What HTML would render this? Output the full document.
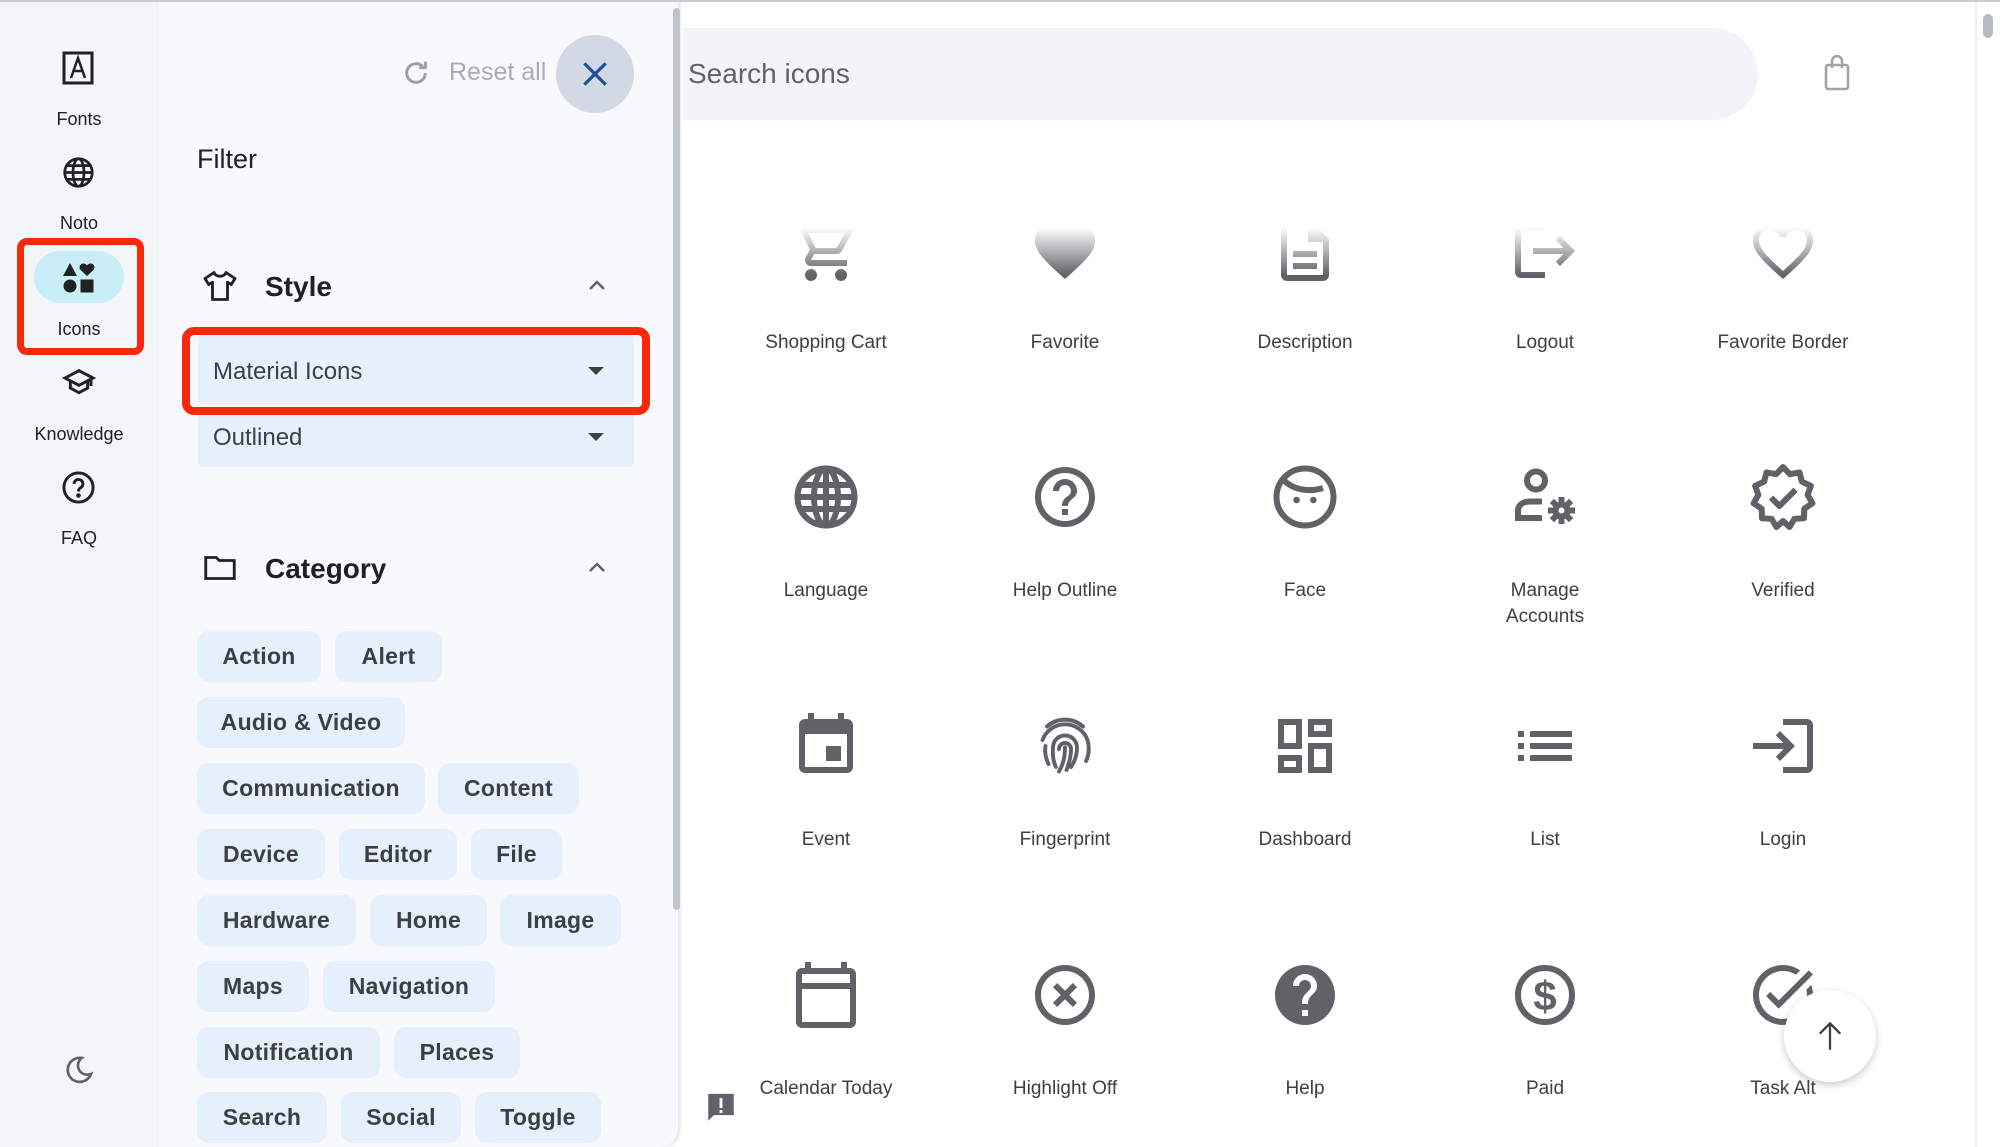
<!DOCTYPE html>
<html><head><meta charset="utf-8"><style>
*{box-sizing:border-box;margin:0;padding:0}
body{width:2000px;height:1147px;overflow:hidden;background:#fff;font-family:"Liberation Sans",sans-serif;position:relative;color:#202124}
.abs{position:absolute}
.rail{left:0;top:0;width:158px;height:1147px;background:#f3f5f9}
.rl{position:absolute;width:158px;text-align:center;font-size:18px;color:#202124}
.panel{left:158px;top:0;width:520px;height:1147px;background:#f8f9fd;border-radius:0 0 18px 0;box-shadow:2px 0 4px rgba(0,0,0,.12)}
.chip{position:absolute;height:51px;background:#e6effc;border-radius:12px;font-size:23px;font-weight:bold;color:#3c4043;line-height:51px;text-align:center;letter-spacing:.3px}
.ic{position:absolute;width:72px;height:72px}
.lb{position:absolute;width:230px;text-align:center;font-size:19px;color:#3c4043;line-height:26px}
</style></head><body>
<div class="abs" style="left:0;top:0;width:2000px;height:2px;background:#c8ccd2;z-index:9"></div>
<div class="abs rail"></div>
<svg class="abs" style="left:62px;top:50px" width="32" height="36" viewBox="0 0 32 36"><rect x="2" y="3" width="28" height="30" fill="none" stroke="#202124" stroke-width="3"/><path d="M9 28 L16 8 L23 28 M11.5 21 H20.5" fill="none" stroke="#202124" stroke-width="2.5"/></svg>
<div class="rl" style="top:109px">Fonts</div>
<svg class="abs" style="left:62px;top:156px" width="33" height="33" viewBox="0 0 24 24" fill="none" stroke="#202124" stroke-width="2"><circle cx="12" cy="12" r="10"/><ellipse cx="12" cy="12" rx="4" ry="10"/><path d="M2 12h20M3.5 7h17M3.5 17h17"/></svg>
<div class="rl" style="top:213px">Noto</div>
<div class="abs" style="left:34px;top:251px;width:90px;height:52px;border-radius:26px;background:#c8eef8"></div>
<svg class="abs" style="left:62px;top:262px" width="34" height="32" viewBox="0 0 34 32" fill="#202124"><path d="M1 14 L8 1 L15 14Z"/><path d="M25 14 l-7-6.5 a4 4 0 0 1 7-4 a4 4 0 0 1 7 4Z"/><circle cx="8" cy="24" r="6.5"/><rect x="18.5" y="17.5" width="13" height="13"/></svg>
<div class="rl" style="top:319px">Icons</div>
<div class="abs" style="left:17px;top:238px;width:127px;height:117px;border:7px solid #f7290a;border-radius:10px"></div>
<svg class="abs" style="left:62px;top:366px" width="34" height="32" viewBox="0 0 24 24" fill="none" stroke="#202124" stroke-width="2.2"><path d="M1.5 9L12 3.5 22.5 9 12 14.5Z"/><path d="M5.5 11.5v5L12 20l6.5-3.5v-5M21 9v6"/></svg>
<div class="rl" style="top:424px">Knowledge</div>
<svg class="abs" style="left:61px;top:470px" width="35" height="35" viewBox="0 0 24 24" fill="none" stroke="#202124" stroke-width="2"><circle cx="12" cy="12" r="10"/><path d="M9 9.5a3 3 0 1 1 4.5 2.6c-1 .6-1.5 1.2-1.5 2.6"/><circle cx="12" cy="17.5" r=".6" fill="#202124"/></svg>
<div class="rl" style="top:528px">FAQ</div>
<svg class="abs" style="left:63px;top:1054px" width="32" height="32" viewBox="0 0 24 24" fill="none" stroke="#5f6368" stroke-width="2"><path d="M14 3a9 9 0 1 0 7 12A7 7 0 0 1 14 3z"/></svg>

<div class="abs panel"></div>
<div class="abs" style="left:673px;top:8px;width:7px;height:902px;background:#c0c4ca;border-radius:4px"></div>
<svg class="abs" style="left:400px;top:57px" width="32" height="32" viewBox="0 0 24 24" fill="none" stroke="#9aa0a6" stroke-width="2.2"><path d="M19 12a7 7 0 1 1-2.2-5.1"/><path d="M19 3.5V8h-4.5" /></svg>
<div class="abs" style="left:449px;top:58px;font-size:25px;color:#a8adb3">Reset all</div>
<div class="abs" style="left:556px;top:35px;width:78px;height:78px;border-radius:50%;background:#d2d9e5"></div>
<svg class="abs" style="left:579px;top:58px" width="32" height="32" viewBox="0 0 24 24" stroke="#1b4ea0" stroke-width="2.4"><path d="M4 4L20 20M20 4L4 20"/></svg>
<div class="abs" style="left:197px;top:144px;font-size:27px;color:#202124">Filter</div>
<svg class="abs" style="left:202px;top:268px" width="36" height="36" viewBox="0 0 24 24" fill="none" stroke="#202124" stroke-width="1.9" stroke-linejoin="round"><path d="M8 3l-6 4 2.5 4 2.5-1.5V21h10V9.5l2.5 1.5L22 7l-6-4c-.5 1.5-2 2.5-4 2.5S8.5 4.5 8 3z"/></svg>
<div class="abs" style="left:265px;top:271px;font-size:28px;font-weight:bold;color:#202124">Style</div>
<svg class="abs" style="left:585px;top:275px" width="24" height="20" viewBox="0 0 24 20" fill="none" stroke="#5f6368" stroke-width="2.5"><path d="M5 14l7-7 7 7"/></svg>
<div class="abs" style="left:198px;top:334px;width:436px;height:71px;background:#e7f0fd;border-radius:6px"></div>
<div class="abs" style="left:213px;top:358px;font-size:24px;color:#3c4043">Material Icons</div>
<svg class="abs" style="left:587px;top:366px" width="18" height="10" viewBox="0 0 18 10"><path d="M1 1h16L9 9z" fill="#3c4043"/></svg>
<div class="abs" style="left:182px;top:327px;width:468px;height:88px;border:8px solid #f7290a;border-radius:12px"></div>
<div class="abs" style="left:198px;top:415px;width:436px;height:52px;background:#e7f0fd;border-radius:0 0 6px 6px"></div>
<div class="abs" style="left:213px;top:424px;font-size:24px;color:#3c4043">Outlined</div>
<svg class="abs" style="left:587px;top:432px" width="18" height="10" viewBox="0 0 18 10"><path d="M1 1h16L9 9z" fill="#3c4043"/></svg>
<svg class="abs" style="left:202px;top:550px" width="36" height="36" viewBox="0 0 24 24" fill="none" stroke="#202124" stroke-width="1.9"><path d="M2.5 5h7l2 2h10v12h-19z"/></svg>
<div class="abs" style="left:265px;top:553px;font-size:28px;font-weight:bold;color:#202124">Category</div>
<svg class="abs" style="left:585px;top:557px" width="24" height="20" viewBox="0 0 24 20" fill="none" stroke="#5f6368" stroke-width="2.5"><path d="M5 14l7-7 7 7"/></svg>

<div class="chip" style="left:197px;top:631px;width:124px">Action</div>
<div class="chip" style="left:335px;top:631px;width:107px">Alert</div>
<div class="chip" style="left:197px;top:697px;width:208px">Audio &amp; Video</div>
<div class="chip" style="left:197px;top:763px;width:228px">Communication</div>
<div class="chip" style="left:438px;top:763px;width:141px">Content</div>
<div class="chip" style="left:197px;top:829px;width:128px">Device</div>
<div class="chip" style="left:339px;top:829px;width:118px">Editor</div>
<div class="chip" style="left:471px;top:829px;width:91px">File</div>
<div class="chip" style="left:197px;top:895px;width:159px">Hardware</div>
<div class="chip" style="left:370px;top:895px;width:117px">Home</div>
<div class="chip" style="left:500px;top:895px;width:121px">Image</div>
<div class="chip" style="left:197px;top:961px;width:112px">Maps</div>
<div class="chip" style="left:323px;top:961px;width:172px">Navigation</div>
<div class="chip" style="left:197px;top:1027px;width:183px">Notification</div>
<div class="chip" style="left:394px;top:1027px;width:126px">Places</div>
<div class="chip" style="left:197px;top:1092px;width:130px">Search</div>
<div class="chip" style="left:341px;top:1092px;width:120px">Social</div>
<div class="chip" style="left:475px;top:1092px;width:126px">Toggle</div>

<div class="abs" style="left:683px;top:28px;width:1075px;height:92px;background:#f2f4f9;border-radius:0 46px 46px 0"></div>
<div class="abs" style="left:688px;top:58px;font-size:28px;color:#5f6368">Search icons</div>
<svg class="abs" style="left:1823px;top:55px" width="28" height="36" viewBox="0 0 28 36" fill="none" stroke="#a0a4a8" stroke-width="2.5"><rect x="3" y="10" width="22" height="24" rx="2"/><path d="M9 13V6a5 5 0 0 1 10 0v7"/></svg>
<div class="abs" style="left:1975px;top:2px;width:2px;height:1145px;background:#eceef0"></div>
<div class="abs" style="left:1983px;top:14px;width:10px;height:24px;background:#b7bbbf;border-radius:5px"></div>

<svg class="ic" style="left:790px;top:215px" viewBox="0 0 24 24" fill="#5f6368"><path d="M15.55 13c.75 0 1.41-.41 1.75-1.03l3.58-6.49c.37-.66-.11-1.48-.87-1.48H5.21l-.94-2H1v2h2l3.6 7.59-1.35 2.44C4.52 15.37 5.48 17 7 17h12v-2H7l1.1-2h7.45zM6.16 6h12.15l-2.76 5H8.53L6.16 6zM7 18c-1.1 0-1.99.9-1.99 2S5.9 22 7 22s2-.9 2-2-.9-2-2-2zm10 0c-1.1 0-1.99.9-1.99 2s.89 2 1.99 2 2-.9 2-2-.9-2-2-2z"/></svg>
<svg class="ic" style="left:1029px;top:215px" viewBox="0 0 24 24" fill="#5f6368"><path d="M12 21.35l-1.45-1.32C5.4 15.36 2 12.28 2 8.5 2 5.42 4.42 3 7.5 3c1.74 0 3.41.81 4.5 2.09C13.09 3.81 14.76 3 16.5 3 19.58 3 22 5.420 22 8.5c0 3.78-3.4 6.86-8.55 11.54L12 21.35z"/></svg>
<svg class="ic" style="left:1269px;top:215px" viewBox="0 0 24 24" fill="#5f6368"><path d="M8 16h8v2H8zm0-4h8v2H8zm6-10H6c-1.1 0-2 .9-2 2v16c0 1.1.89 2 1.99 2H18c1.1 0 2-.9 2-2V8l-6-6zm4 18H6V4h7v5h5v11z"/></svg>
<svg class="ic" style="left:1509px;top:215px" viewBox="0 0 24 24" fill="#5f6368"><path d="M17 7l-1.41 1.41L18.17 11H8v2h10.17l-2.58 2.58L17 17l5-5zM4 5h8V3H4c-1.1 0-2 .9-2 2v14c0 1.1.9 2 2 2h8v-2H4V5z"/></svg>
<svg class="ic" style="left:1747px;top:215px" viewBox="0 0 24 24" fill="#5f6368"><path d="M16.5 3c-1.74 0-3.41.81-4.5 2.09C10.91 3.81 9.24 3 7.5 3 4.42 3 2 5.42 2 8.5c0 3.78 3.4 6.86 8.55 11.54L12 21.35l1.45-1.32C18.6 15.36 22 12.28 22 8.5 22 5.42 19.58 3 16.5 3zm-4.4 15.55l-.1.1-.1-.1C7.14 14.24 4 11.39 4 8.5 4 6.5 5.5 5 7.5 5c1.54 0 3.04.99 3.57 2.36h1.87C13.46 5.99 14.96 5 16.5 5c2 0 3.5 1.5 3.5 3.5 0 2.89-3.14 5.74-7.9 10.05z"/></svg>
<div class="abs" style="left:684px;top:150px;width:1290px;height:125px;background:linear-gradient(#fff 0%,#fff 62%,rgba(255,255,255,0) 100%)"></div>
<div class="lb" style="left:711px;top:330px">Shopping Cart</div>
<div class="lb" style="left:950px;top:330px">Favorite</div>
<div class="lb" style="left:1190px;top:330px">Description</div>
<div class="lb" style="left:1430px;top:330px">Logout</div>
<div class="lb" style="left:1668px;top:330px">Favorite Border</div>

<svg class="ic" style="left:790px;top:461px" viewBox="0 0 24 24" fill="none" stroke="#5f6368" stroke-width="2"><circle cx="12" cy="12" r="9.5"/><ellipse cx="12" cy="12" rx="4" ry="9.5"/><path d="M2.5 12h19M3.5 8h17M3.5 16h17M12 2.5v19"/></svg>
<svg class="ic" style="left:1029px;top:461px" viewBox="0 0 24 24" fill="#5f6368"><path d="M11 18h2v-2h-2v2zm1-16C6.48 2 2 6.48 2 12s4.48 10 10 10 10-4.48 10-10S17.52 2 12 2zm0 18c-4.41 0-8-3.59-8-8s3.59-8 8-8 8 3.59 8 8-3.59 8-8 8zm0-14c-2.21 0-4 1.79-4 4h2c0-1.1.9-2 2-2s2 .9 2 2c0 2-3 1.75-3 5h2c0-2.25 3-2.5 3-5 0-2.21-1.79-4-4-4z"/></svg>
<svg class="ic" style="left:1269px;top:461px" viewBox="0 0 24 24" fill="none" stroke="#5f6368" stroke-width="2"><circle cx="12" cy="12" r="9.5"/><path d="M5 6.5c3 3 8 4 13 2.5"/><circle cx="9.2" cy="13" r="1.1" fill="#5f6368" stroke="none"/><circle cx="14.8" cy="13" r="1.1" fill="#5f6368" stroke="none"/></svg>
<svg class="ic" style="left:1509px;top:461px" viewBox="0 0 24 24" fill="none" stroke="#5f6368" stroke-width="2"><circle cx="9" cy="6.5" r="3"/><path d="M11 13.5H7c-2.5 0-4 1.3-4 3V19h8"/><circle cx="17.5" cy="16.5" r="2"/><path d="M17.5 12v2M17.5 19v2M13 16.5h2M20 16.5h2M14.3 13.3l1.4 1.4M19.3 18.3l1.4 1.4M14.3 19.7l1.4-1.4M19.3 14.7l1.4-1.4"/></svg>
<svg class="ic" style="left:1747px;top:461px" viewBox="0 0 24 24" fill="none" stroke="#5f6368" stroke-width="2" stroke-linejoin="round"><path d="M12 2l2.3 2.4 3.2-.6.8 3.1 3 1.4-1.1 3 1.6 2.8-2.7 1.8-.1 3.2-3.2.2L14.2 22 12 20l-2.2 2-1.6-2.7-3.2-.2-.1-3.2-2.7-1.8 1.6-2.8-1.1-3 3-1.4.8-3.1 3.2.6z"/><path d="M8 12.2l2.8 2.8 5.4-5.4"/></svg>
<div class="lb" style="left:711px;top:578px">Language</div>
<div class="lb" style="left:950px;top:578px">Help Outline</div>
<div class="lb" style="left:1190px;top:578px">Face</div>
<div class="lb" style="left:1430px;top:578px">Manage<br>Accounts</div>
<div class="lb" style="left:1668px;top:578px">Verified</div>

<svg class="ic" style="left:790px;top:710px" viewBox="0 0 24 24" fill="#5f6368"><path d="M17 12h-5v5h5v-5zM16 1v2H8V1H6v2H5c-1.11 0-1.99.9-1.99 2L3 19c0 1.1.89 2 2 2h14c1.1 0 2-.9 2-2V5c0-1.1-.9-2-2-2h-1V1h-2zm3 18H5V8h14v11z"/></svg>
<svg class="ic" style="left:1029px;top:710px" viewBox="0 0 24 24" fill="none" stroke="#5f6368" stroke-width="1.3" stroke-linecap="round"><path d="M6 5.5a9 9 0 0 1 12 0"/><path d="M4.5 10a8 8 0 0 1 15 0c.6 2 .6 5-.5 7"/><path d="M6.5 18c-1-2-1.3-4-1-6"/><path d="M8 12.5a4 4 0 0 1 8 0c0 3-1 5-2 6.5"/><path d="M9 19c-.8-1.5-1.2-3.5-1-6.5"/><path d="M12 12.5c0 3-.5 5.5-2 8"/><path d="M10 13a2 2 0 0 1 4 0c0 2-.5 4.5-1.5 7"/></svg>
<svg class="ic" style="left:1269px;top:710px" viewBox="0 0 24 24" fill="#5f6368"><path d="M19 5v2h-4V5h4M9 5v6H5V5h4m10 8v6h-4v-6h4M9 17v2H5v-2h4M21 3h-8v6h8V3zM11 3H3v10h8V3zm10 8h-8v10h8V11zm-10 4H3v6h8v-6z"/></svg>
<svg class="ic" style="left:1509px;top:710px" viewBox="0 0 24 24" fill="#5f6368"><path d="M3 13h2v-2H3v2zm0 4h2v-2H3v2zm0-8h2V7H3v2zm4 4h14v-2H7v2zm0 4h14v-2H7v2zM7 7v2h14V7H7z"/></svg>
<svg class="ic" style="left:1747px;top:710px" viewBox="0 0 24 24" fill="#5f6368"><path d="M11 7L9.6 8.4l2.6 2.6H2v2h10.2l-2.6 2.6L11 17l5-5-5-5zm9 12h-8v2h8c1.1 0 2-.9 2-2V5c0-1.1-.9-2-2-2h-8v2h8v14z"/></svg>
<div class="lb" style="left:711px;top:827px">Event</div>
<div class="lb" style="left:950px;top:827px">Fingerprint</div>
<div class="lb" style="left:1190px;top:827px">Dashboard</div>
<div class="lb" style="left:1430px;top:827px">List</div>
<div class="lb" style="left:1668px;top:827px">Login</div>

<svg class="ic" style="left:790px;top:959px" viewBox="0 0 24 24" fill="#5f6368"><path d="M20 3h-1V1h-2v2H7V1H5v2H4c-1.1 0-2 .9-2 2v16c0 1.1.9 2 2 2h16c1.1 0 2-.9 2-2V5c0-1.1-.9-2-2-2zm0 18H4V10h16v11zm0-13H4V5h16v3z"/></svg>
<svg class="ic" style="left:1029px;top:959px" viewBox="0 0 24 24" fill="#5f6368"><path d="M14.59 8L12 10.59 9.41 8 8 9.41 10.59 12 8 14.59 9.41 16 12 13.41 14.59 16 16 14.59 13.41 12 16 9.41 14.59 8zM12 2C6.47 2 2 6.47 2 12s4.47 10 10 10 10-4.47 10-10S17.53 2 12 2zm0 18c-4.41 0-8-3.59-8-8s3.59-8 8-8 8 3.59 8 8-3.59 8-8 8z"/></svg>
<svg class="ic" style="left:1269px;top:959px" viewBox="0 0 24 24" fill="#5f6368"><path d="M12 2C6.48 2 2 6.48 2 12s4.48 10 10 10 10-4.48 10-10S17.52 2 12 2zm1 17h-2v-2h2v2zm2.07-7.75l-.9.92C13.45 12.9 13 13.5 13 15h-2v-.5c0-1.1.45-2.1 1.17-2.83l1.24-1.26c.37-.36.59-.86.59-1.41 0-1.1-.9-2-2-2s-2 .9-2 2H8c0-2.21 1.79-4 4-4s4 1.79 4 4c0 .88-.36 1.68-.93 2.25z"/></svg>
<svg class="ic" style="left:1509px;top:959px" viewBox="0 0 24 24"><circle cx="12" cy="12" r="9" fill="none" stroke="#5f6368" stroke-width="2"/><text x="12" y="17.2" text-anchor="middle" font-family="Liberation Sans" font-weight="bold" font-size="14" fill="#5f6368">$</text></svg>
<svg class="ic" style="left:1747px;top:959px" viewBox="0 0 24 24" fill="#5f6368"><path d="M22 5.18L10.59 16.6l-4.24-4.24 1.41-1.41 2.83 2.83 10-10L22 5.18zm-2.21 5.04c.13.57.21 1.17.21 1.78 0 4.42-3.58 8-8 8s-8-3.58-8-8 3.58-8 8-8c1.58 0 3.04.46 4.28 1.25l1.44-1.44C16.1 2.67 14.13 2 12 2 6.48 2 2 6.48 2 12s4.48 10 10 10 10-4.48 10-10c0-1.19-.22-2.33-.6-3.39l-1.61 1.61z"/></svg>
<div class="lb" style="left:711px;top:1076px">Calendar Today</div>
<div class="lb" style="left:950px;top:1076px">Highlight Off</div>
<div class="lb" style="left:1190px;top:1076px">Help</div>
<div class="lb" style="left:1430px;top:1076px">Paid</div>
<div class="lb" style="left:1668px;top:1076px">Task Alt</div>

<svg class="abs" style="left:704px;top:1090px" width="34" height="36" viewBox="0 0 24 24" fill="#5f6368"><path d="M3 2h18v15H7l-4 4z"/><rect x="11" y="5" width="2" height="7" fill="#fff"/><rect x="11" y="13.5" width="2" height="2" fill="#fff"/></svg>
<div class="abs" style="left:1784px;top:990px;width:92px;height:92px;border-radius:50%;background:#fff;box-shadow:0 3px 8px rgba(0,0,0,.2)"></div>
<svg class="abs" style="left:1816px;top:1020px" width="28" height="32" viewBox="0 0 24 28" fill="none" stroke="#3c4043" stroke-width="2"><path d="M12 26V3M3 12l9-9 9 9"/></svg>
</body></html>
